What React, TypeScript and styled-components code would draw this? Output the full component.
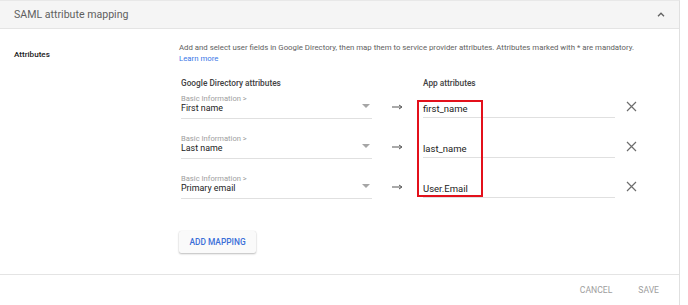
import React from "react";
import styled, { createGlobalStyle } from "styled-components";

const Global = createGlobalStyle`
  html, body { margin: 0; padding: 0; background: #ffffff; }
  body { font-family: Roboto, "Noto Sans", Arial, sans-serif; }
`;

const Card = styled.div`
  width: 680px;
  box-sizing: border-box;
  border-top: 1px solid #e8e8e8;
  border-right: 1px solid #e0e0e0;
  border-bottom: 2px solid #d6d6d6;
  background: #fff;
`;

const Header = styled.div`
  height: 28px;
  box-sizing: border-box;
  background: #f5f5f5;
  border-bottom: 1px solid #e4e4e4;
  display: flex;
  align-items: center;
  justify-content: space-between;
  padding: 0 14px 0 14px;
`;

const Title = styled.div`
  font-size: 10.6px;
  color: #5f5f5f;
`;

const Body = styled.div`
  display: grid;
  grid-template-columns: 179px 1fr;
  padding: 13px 0 21px 0;
`;

const SideLabel = styled.div`
  padding: 7px 0 0 14px;
  font-size: 8.1px;
  line-height: 11px;
  font-weight: 500;
  color: #212121;
`;

const Content = styled.div`
  display: flex;
  flex-direction: column;
`;

const Description = styled.div`
  font-size: 7.8px;
  line-height: 11px;
  color: #616161;
  white-space: nowrap;
`;

const LearnMore = styled.a`
  color: #3b78e7;
  text-decoration: none;
  display: block;
`;

const Mapping = styled.div`
  position: relative;
  margin-top: 14px;
  padding-left: 2px;
  display: flex;
  flex-direction: column;
  gap: 15px;
`;

const Columns = styled.div`
  display: grid;
  grid-template-columns: 191px 51px 192px 32px;
  align-items: end;
`;

const HeaderRow = styled(Columns)`
  margin-bottom: -10px;
`;

const ColHeader = styled.div<{ $col: number }>`
  grid-column: ${(p) => p.$col};
  font-size: 8.3px;
  line-height: 11px;
  font-weight: 500;
  color: #424242;
`;

const Select = styled.div`
  position: relative;
  border-bottom: 1px solid #e0e0e0;
  padding-bottom: 4px;
`;

const SelectHint = styled.div`
  font-size: 7.6px;
  line-height: 9px;
  color: #9e9e9e;
`;

const SelectValue = styled.div`
  font-size: 8.9px;
  line-height: 11px;
  color: #212121;
`;

const Caret = styled.span`
  position: absolute;
  right: 2px;
  top: 10px;
  width: 0;
  height: 0;
  border-left: 4px solid transparent;
  border-right: 4px solid transparent;
  border-top: 4px solid #a6a6a6;
`;

const Arrow = styled.div`
  display: flex;
  justify-content: center;
  align-items: center;
  height: 16px;
  margin-bottom: 4px;
`;

const Field = styled.div`
  border-bottom: 1px solid #e0e0e0;
  font-size: 9.5px;
  line-height: 13px;
  color: #212121;
  padding-bottom: 2px;
  margin-bottom: 1px;
`;

const Remove = styled.button`
  border: 0;
  background: transparent;
  padding: 0;
  height: 16px;
  display: flex;
  align-items: center;
  justify-content: center;
  margin-bottom: 5px;
  cursor: pointer;
`;

const Highlight = styled.div`
  position: absolute;
  left: 238px;
  top: 22px;
  width: 62px;
  height: 93px;
  border: 2px solid #e3101b;
  pointer-events: none;
`;

const AddButton = styled.button`
  align-self: flex-start;
  margin-top: 32px;
  height: 22px;
  width: 77px;
  border: 0;
  border-radius: 2px;
  background: #fafafa;
  box-shadow: 0 1px 2px rgba(0, 0, 0, 0.25), 0 0 1px rgba(0, 0, 0, 0.12);
  color: #3b6fd8;
  font-family: Roboto, Arial, sans-serif;
  font-size: 8.4px;
  font-weight: 500;
  padding: 0;
`;

const Footer = styled.div`
  border-top: 1px solid #e4e4e4;
  height: 30px;
  display: flex;
  align-items: center;
  justify-content: flex-end;
  gap: 26px;
  padding-right: 20px;
`;

const FooterButton = styled.button`
  border: 0;
  background: transparent;
  padding: 0;
  font-family: Roboto, Arial, sans-serif;
  font-size: 8.6px;
  color: #9e9e9e;
`;

const rows = [
  { value: "First name", attr: "first_name" },
  { value: "Last name", attr: "last_name" },
  { value: "Primary email", attr: "User.Email" },
];

const ArrowIcon = () => (
  <svg width="11" height="6" viewBox="0 0 11 6">
    <path d="M0 3h9" stroke="#555" strokeWidth="1" />
    <path d="M7 1l3 2-3 2" fill="none" stroke="#555" strokeWidth="1" />
  </svg>
);

const CloseIcon = () => (
  <svg width="11" height="11" viewBox="0 0 11 11">
    <path d="M1 1l9 9M10 1l-9 9" stroke="#6d6d6d" strokeWidth="1.2" />
  </svg>
);

const ChevronUp = () => (
  <svg width="8" height="5" viewBox="0 0 8 5">
    <path d="M1 4.2l3-3 3 3" fill="none" stroke="#616161" strokeWidth="1.3" />
  </svg>
);

export default function App() {
  return (
    <>
      <Global />
      <Card>
        <Header>
          <Title>SAML attribute mapping</Title>
          <ChevronUp />
        </Header>
        <Body>
          <SideLabel>Attributes</SideLabel>
          <Content>
            <Description>
              Add and select user fields in Google Directory, then map them to service provider attributes. Attributes marked with * are mandatory.
              <LearnMore href="#">Learn more</LearnMore>
            </Description>
            <Mapping>
              <HeaderRow>
                <ColHeader $col={1}>Google Directory attributes</ColHeader>
                <ColHeader $col={3}>App attributes</ColHeader>
              </HeaderRow>
              {rows.map((r) => (
                <Columns key={r.attr}>
                  <Select>
                    <SelectHint>Basic Information &gt;</SelectHint>
                    <SelectValue>{r.value}</SelectValue>
                    <Caret />
                  </Select>
                  <Arrow>
                    <ArrowIcon />
                  </Arrow>
                  <Field>{r.attr}</Field>
                  <Remove aria-label="Remove">
                    <CloseIcon />
                  </Remove>
                </Columns>
              ))}
              <Highlight />
            </Mapping>
            <AddButton>ADD MAPPING</AddButton>
          </Content>
        </Body>
        <Footer>
          <FooterButton>CANCEL</FooterButton>
          <FooterButton>SAVE</FooterButton>
        </Footer>
      </Card>
    </>
  );
}
